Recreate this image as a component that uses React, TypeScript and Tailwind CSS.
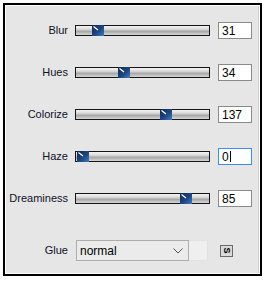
import React from "react";

const rows = [
  { label: "Blur", value: "31", pos: 16 },
  { label: "Hues", value: "34", pos: 42 },
  { label: "Colorize", value: "137", pos: 84 },
  { label: "Haze", value: "0", pos: 1, focused: true },
  { label: "Dreaminess", value: "85", pos: 104 },
];

function Thumb({ left }: { left: number }) {
  return (
    <svg
      className="absolute top-[-1px]"
      style={{ left }}
      width="12"
      height="11"
      viewBox="0 0 12 11"
    >
      <defs>
        <linearGradient id="tg" x1="0" y1="0" x2="1" y2="1">
          <stop offset="0" stopColor="#10284c" />
          <stop offset="0.55" stopColor="#1d4680" />
          <stop offset="1" stopColor="#3f7cc6" />
        </linearGradient>
      </defs>
      <rect x="0" y="0" width="12" height="11" fill="url(#tg)" />
      <line x1="1.5" y1="1.5" x2="6" y2="5" stroke="#ffffff" strokeWidth="1.3" />
    </svg>
  );
}

export default function App() {
  return (
    <div
      className="w-[267px] h-[281px] bg-white pt-[3px] pl-[3px]"
      style={{ fontFamily: '"Liberation Sans", Arial, sans-serif' }}
    >
      <div className="w-[259px] h-[273px] border-2 border-black flex">
        <div className="flex-1 border border-white bg-[#e6e6e6] flex">
          <div className="flex-1 flex flex-col pt-[16px] border-r border-[#cfcfcf]">
            {rows.map((r, i) => (
              <div key={r.label} className={"flex items-center h-[17px] " + (i > 0 ? "mt-[25px]" : "")}>
                <div className="w-[63px] pr-[1px] text-right text-[11px] leading-none text-[#10102a]">
                  {r.label}
                </div>
                <div className="ml-[6px] w-[135px] h-[11px] relative border border-[#151515] bg-[linear-gradient(to_bottom,#f4f4f4_0%,#dadada_35%,#a8a8a8_60%,#d6d6d6_100%)]">
                  <Thumb left={r.pos} />
                </div>
                <div
                  className={
                    "ml-[8px] w-[34px] h-[17px] bg-white border flex items-center pl-[3px] text-[12px] leading-none text-black " +
                    (r.focused ? "border-[#3d8ee8]" : "border-[#8a8a8a]")
                  }
                >
                  {r.value}
                  {r.focused && <span className="ml-[1px] w-[1px] h-[11px] bg-black" />}
                </div>
              </div>
            ))}
            <div className="flex items-center h-[21px] mt-[33px]">
              <div className="w-[63px] pr-[1px] text-right text-[11px] leading-none text-[#10102a]">Glue</div>
              <div className="ml-[7px] w-[113px] h-[21px] bg-[#ebebeb] border border-[#adadad] flex items-center pl-[3px] pr-[3px] text-[12px] text-black">
                <span className="flex-1">normal</span>
                <svg width="10" height="6" viewBox="0 0 10 6" className="mr-[2px]">
                  <polyline points="0.5,0.5 5,5 9.5,0.5" fill="none" stroke="#555" strokeWidth="1" />
                </svg>
              </div>
              <div className="w-[19px] h-[21px] bg-[#efefef] border-y border-r border-[#e2e2e2]" />
              <div className="ml-[12px] w-[13px] h-[12px] bg-[#dadada] border border-[#6a6a6a] flex items-center justify-center">
                <span className="text-[9px] font-bold leading-none text-black rotate-90 inline-block">S</span>
              </div>
            </div>
          </div>
        </div>
      </div>
    </div>
  );
}
